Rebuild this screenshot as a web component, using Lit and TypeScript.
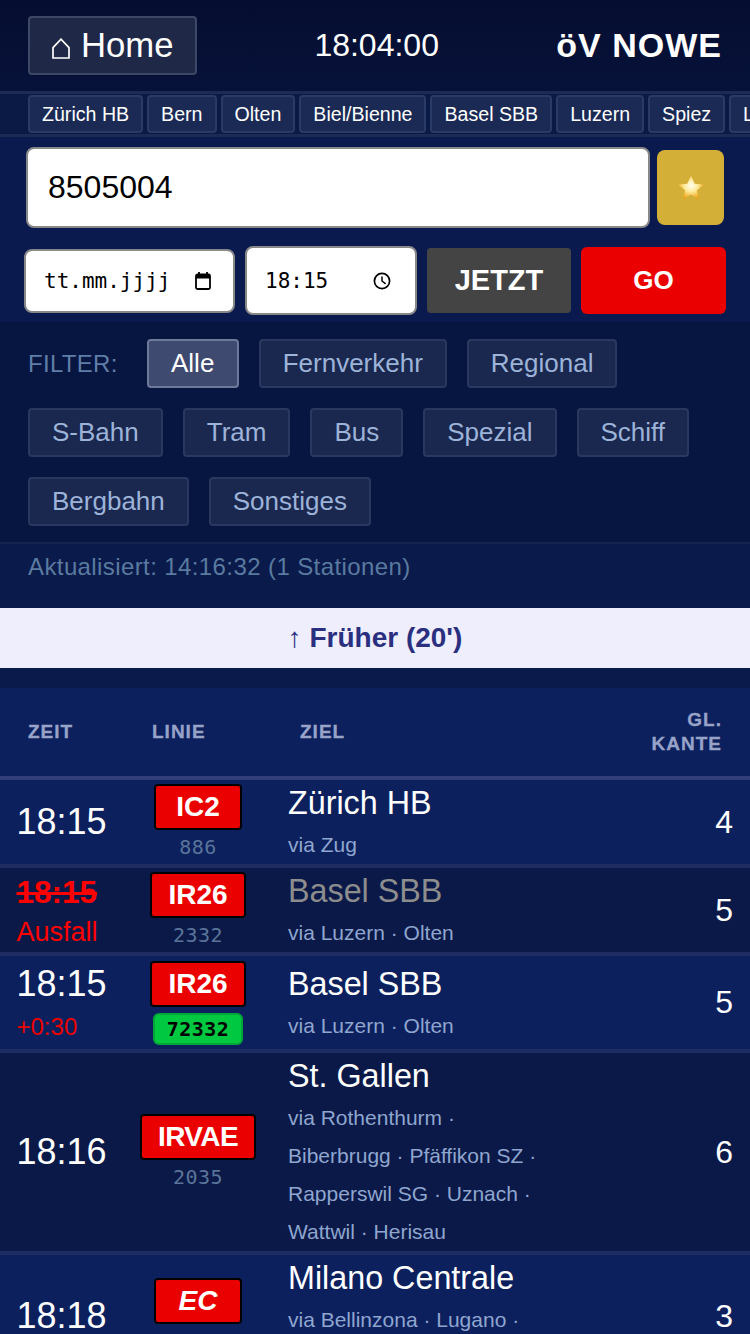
import { LitElement, html, css, svg } from 'lit';
import { customElement } from 'lit/decorators.js';

type Dep = {
  time: string; line: string; num?: string; green?: string; dest: string; via: string;
  track: string; delay?: string; cancelled?: boolean; italic?: boolean; tight?: boolean;
};

const stations = ['Zürich HB', 'Bern', 'Olten', 'Biel/Bienne', 'Basel SBB', 'Luzern', 'Spiez', 'Lausanne'];
const filters = ['Alle', 'Fernverkehr', 'Regional', 'S-Bahn', 'Tram', 'Bus', 'Spezial', 'Schiff', 'Bergbahn', 'Sonstiges'];

const deps: Dep[] = [
  { time: '18:15', line: 'IC2', num: '886', dest: 'Zürich HB', via: 'via Zug', track: '4' },
  { time: '18:15', line: 'IR26', num: '2332', dest: 'Basel SBB', via: 'via Luzern · Olten', track: '5', cancelled: true },
  { time: '18:15', line: 'IR26', green: '72332', dest: 'Basel SBB', via: 'via Luzern · Olten', track: '5', delay: '+0:30' },
  { time: '18:16', line: 'IRVAE', num: '2035', dest: 'St. Gallen', via: 'via Rothenthurm · Biberbrugg · Pfäffikon SZ · Rapperswil SG · Uznach · Wattwil · Herisau', track: '6', tight: true },
  { time: '18:18', line: 'EC', num: '17', dest: 'Milano Centrale', via: 'via Bellinzona · Lugano · Chiasso', track: '3', italic: true },
];

const homeIcon = svg`<path d="M1 20V9.600L9 1.200l8 8.400V20z" fill="none" stroke="#fff" stroke-width="1.700"/>`;
const calIcon = svg`<path d="M5 0v3M13 0v3" stroke="#000" stroke-width="1.800"/><rect x="2" y="2.500" width="14" height="14.500" rx="1.500" fill="none" stroke="#000" stroke-width="1.800"/><rect x="2" y="2.500" width="14" height="4" fill="#000"/>`;
const clockIcon = svg`<circle cx="9" cy="9" r="7.600" fill="none" stroke="#000" stroke-width="1.700"/><path d="M9 4.400V9l3.600 2.800" fill="none" stroke="#000" stroke-width="1.500"/>`;

@customElement('app-root')
export class AppRoot extends LitElement {
  static styles = css`
    :host {
      display: block;
      height: 1334px;
      overflow: hidden;
      background: #0a1a4b;
      font-family: "Liberation Sans", Arial, sans-serif;
      color: #fff;
    }
    .header {
      display: flex;
      justify-content: space-between;
      align-items: center;
      padding: 16px 28px;
      background: linear-gradient(#050e30, #07123a);
    }
    .home {
      display: flex;
      align-items: center;
      gap: 11px;
      width: 169px;
      height: 59px;
      box-sizing: border-box;
      padding-left: 22px;
      background: #1f2947;
      border: 2px solid #3d4766;
      border-radius: 4px;
      font-size: 34.700px;
    }
    .home svg { flex: none; width: 18px; height: 21px; margin-top: 5px; }
    .clock { font-size: 32px; }
    .logo { font-size: 34px; font-weight: 700; letter-spacing: 1px; }
    .stations {
      display: flex;
      gap: 4px;
      height: 38px;
      padding: 1px 0 1px 28px;
      overflow: hidden;
      background: #0a1a45;
      border-top: 3px solid #1c2a55;
      border-bottom: 3px solid #1c2a55;
    }
    .station {
      flex: none;
      display: flex;
      align-items: center;
      box-sizing: border-box;
      padding: 0 12px;
      background: #1a2a55;
      border: 2px solid #2a3a66;
      border-radius: 4px;
      font-size: 19.600px;
      color: #fff;
    }
    .search {
      padding: 10px 24px 7px;
      background: #0a1a4f;
    }
    .row-a { display: flex; align-items: center; gap: 7px; padding-left: 2px; }
    .text-input {
      width: 624px;
      height: 81px;
      box-sizing: border-box;
      display: flex;
      align-items: center;
      padding-left: 20px;
      background: #fff;
      border: 2px solid #888;
      border-radius: 8px;
      font-size: 32px;
      color: #000;
    }
    .star {
      width: 67px;
      height: 75px;
      display: flex;
      align-items: center;
      justify-content: center;
      background: #d4af37;
      border-radius: 8px;
    }
    .star svg { width: 28px; height: 28px; }
    .row-b { display: flex; align-items: center; gap: 10px; margin-top: 18px; }
    .field {
      display: flex;
      align-items: center;
      justify-content: space-between;
      box-sizing: border-box;
      background: #fff;
      border: 2px solid #888;
      border-radius: 8px;
      font-family: "DejaVu Sans Mono", monospace;
      font-size: 21px;
      color: #000;
    }
    .field svg { flex: none; width: 18px; height: 18px; }
    .date { width: 211px; height: 64px; padding: 0 21px 0 18px; }
    .time { width: 172px; height: 69px; padding: 0 24px 0 18px; }
    .btn {
      display: flex;
      align-items: center;
      justify-content: center;
      color: #fff;
      font-weight: 700;
      border-radius: 4px;
    }
    .now { width: 144px; height: 65px; background: #444; font-size: 29px; }
    .go { width: 145px; height: 67px; background: #eb0000; font-size: 26px; border-radius: 6px; }
    .filters {
      display: flex;
      flex-wrap: wrap;
      align-items: center;
      gap: 20px;
      padding: 17px 28px 16px;
      background: #071541;
    }
    .label { font-size: 24px; letter-spacing: 0.300px; color: #5f7fa8; margin-right: 9px; }
    .chip {
      display: flex;
      align-items: center;
      justify-content: center;
      box-sizing: border-box;
      height: 49px;
      min-width: 92px;
      padding: 0 22px;
      background: #1a2850;
      border: 2px solid #2a3860;
      border-radius: 4px;
      font-size: 26px;
      color: #9db3d8;
    }
    .chip.on { background: #3f4a70; border-color: #6f7a9a; color: #fff; }
    .status {
      height: 64px;
      padding-left: 28px;
      background: #0a1a4b;
      border-top: 2px solid #14234f;
      font-size: 24px;
      line-height: 46px;
      letter-spacing: 0.400px;
      color: #5a7a9f;
    }
    .earlier {
      height: 60px;
      display: flex;
      align-items: center;
      justify-content: center;
      background: #eeeefc;
      color: #2a2f80;
      font-size: 28px;
      font-weight: 700;
    }
    .board { margin-top: 20px; }
    .cols { display: grid; grid-template-columns: 124px 148px 1fr 100px; }
    .head {
      height: 88px;
      align-items: center;
      background: #0c205e;
      font-size: 19px;
      font-weight: 700;
      letter-spacing: 1px;
      color: #98a3c8;
      -webkit-text-stroke: 0.300px #98a3c8;
    }
    .head > div { padding-left: 28px; }
    .head .gl { padding: 0 28px 0 0; text-align: right; line-height: 24px; }
    .dep {
      align-items: center;
      background: #0c205e;
      border-top: 4px solid #1f2c62;
    }
    .head + .dep { border-top-color: #323e78; }
    .dep:nth-of-type(odd) { background: #0a1947; }
    .t { padding-left: 16.500px; }
    .t-main { font-size: 36px; line-height: 48px; }
    .t-delay { font-size: 24px; line-height: 38px; color: #eb0000; }
    .t-off { font-size: 31.500px; font-weight: 700; line-height: 44px; color: #f00; text-decoration: line-through; }
    .t-note { font-size: 27px; line-height: 36px; color: #f00; }
    .l { display: flex; flex-direction: column; align-items: center; padding-top: 4px; }
    .l.g { padding: 5px 0 4px; }
    .badge {
      min-width: 88px;
      height: 46px;
      box-sizing: border-box;
      display: flex;
      align-items: center;
      justify-content: center;
      padding: 0 16px;
      background: #eb0000;
      border: 2px solid #000;
      border-radius: 4px;
      font-size: 28px;
      font-weight: 700;
    }
    .badge.it { font-style: italic; }
    .badge.tight { letter-spacing: -0.600px; }
    .num {
      font-family: "DejaVu Sans Mono", monospace;
      font-size: 20px;
      line-height: 34px;
      letter-spacing: 0.500px;
      color: #5a7499;
    }
    .green {
      margin-top: 6px;
      width: 90px;
      height: 32px;
      box-sizing: border-box;
      display: flex;
      align-items: center;
      justify-content: center;
      background: #00c840;
      border: 2px solid #00a638;
      border-radius: 6px;
      font-family: "DejaVu Sans Mono", monospace;
      font-size: 20px;
      font-weight: 700;
      letter-spacing: 0.500px;
      color: #000;
    }
    .z { padding-left: 16px; }
    .dest { font-size: 32.300px; line-height: 46px; }
    .dest.off { color: #8d8d8d; }
    .via { max-width: 260px; font-size: 21px; line-height: 38px; color: #8fa6cf; }
    .track { padding-right: 17px; text-align: right; font-size: 32px; }
  `;

  render() {
    return html`
      <div class="header">
        <div class="home"><svg viewBox="0 0 18 21">${homeIcon}</svg>Home</div>
        <div class="clock">18:04:00</div>
        <div class="logo">öV NOWE</div>
      </div>
      <div class="stations">
        ${stations.map((s) => html`<div class="station">${s}</div>`)}
      </div>
      <div class="search">
        <div class="row-a">
          <div class="text-input">8505004</div>
          <div class="star">
            <svg viewBox="0 0 28 28">
              <defs>
                <radialGradient id="st" cx="50%" cy="42%" r="58%">
                  <stop offset="0" stop-color="#fffef0"/>
                  <stop offset="0.450" stop-color="#ffeb9a"/>
                  <stop offset="1" stop-color="#f0a010"/>
                </radialGradient>
              </defs>
              <path d="M14 1.500l3.700 8.200 9 .9-6.800 5.900 2 8.800L14 20.600 6.100 25.300l2-8.800L1.300 10.600l9-.9z" fill="url(#st)"/>
            </svg>
          </div>
        </div>
        <div class="row-b">
          <div class="field date">tt.mm.jjjj<svg viewBox="0 0 18 18">${calIcon}</svg></div>
          <div class="field time">18:15<svg viewBox="0 0 18 18">${clockIcon}</svg></div>
          <div class="btn now">JETZT</div>
          <div class="btn go">GO</div>
        </div>
      </div>
      <div class="filters">
        <span class="label">FILTER:</span>
        ${filters.map((f, i) => html`<div class="chip ${i === 0 ? 'on' : ''}">${f}</div>`)}
      </div>
      <div class="status">Aktualisiert: 14:16:32 (1 Stationen)</div>
      <div class="earlier">↑ Früher (20')</div>
      <div class="board">
        <div class="cols head">
          <div>ZEIT</div>
          <div>LINIE</div>
          <div>ZIEL</div>
          <div class="gl">GL.<br />KANTE</div>
        </div>
        ${deps.map((d) => this.renderDep(d))}
      </div>
    `;
  }

  renderDep(d: Dep) {
    return html`
      <div class="cols dep">
        <div class="t">
          ${d.cancelled
            ? html`<div class="t-off">${d.time}</div><div class="t-note">Ausfall</div>`
            : html`<div class="t-main">${d.time}</div>`}
          ${d.delay ? html`<div class="t-delay">${d.delay}</div>` : ''}
        </div>
        <div class="l ${d.green ? 'g' : ''}">
          <div class="badge ${d.italic ? 'it' : ''} ${d.tight ? 'tight' : ''}">${d.line}</div>
          ${d.green ? html`<div class="green">${d.green}</div>` : html`<div class="num">${d.num}</div>`}
        </div>
        <div class="z">
          <div class="dest ${d.cancelled ? 'off' : ''}">${d.dest}</div>
          <div class="via">${d.via}</div>
        </div>
        <div class="track">${d.track}</div>
      </div>
    `;
  }
}
